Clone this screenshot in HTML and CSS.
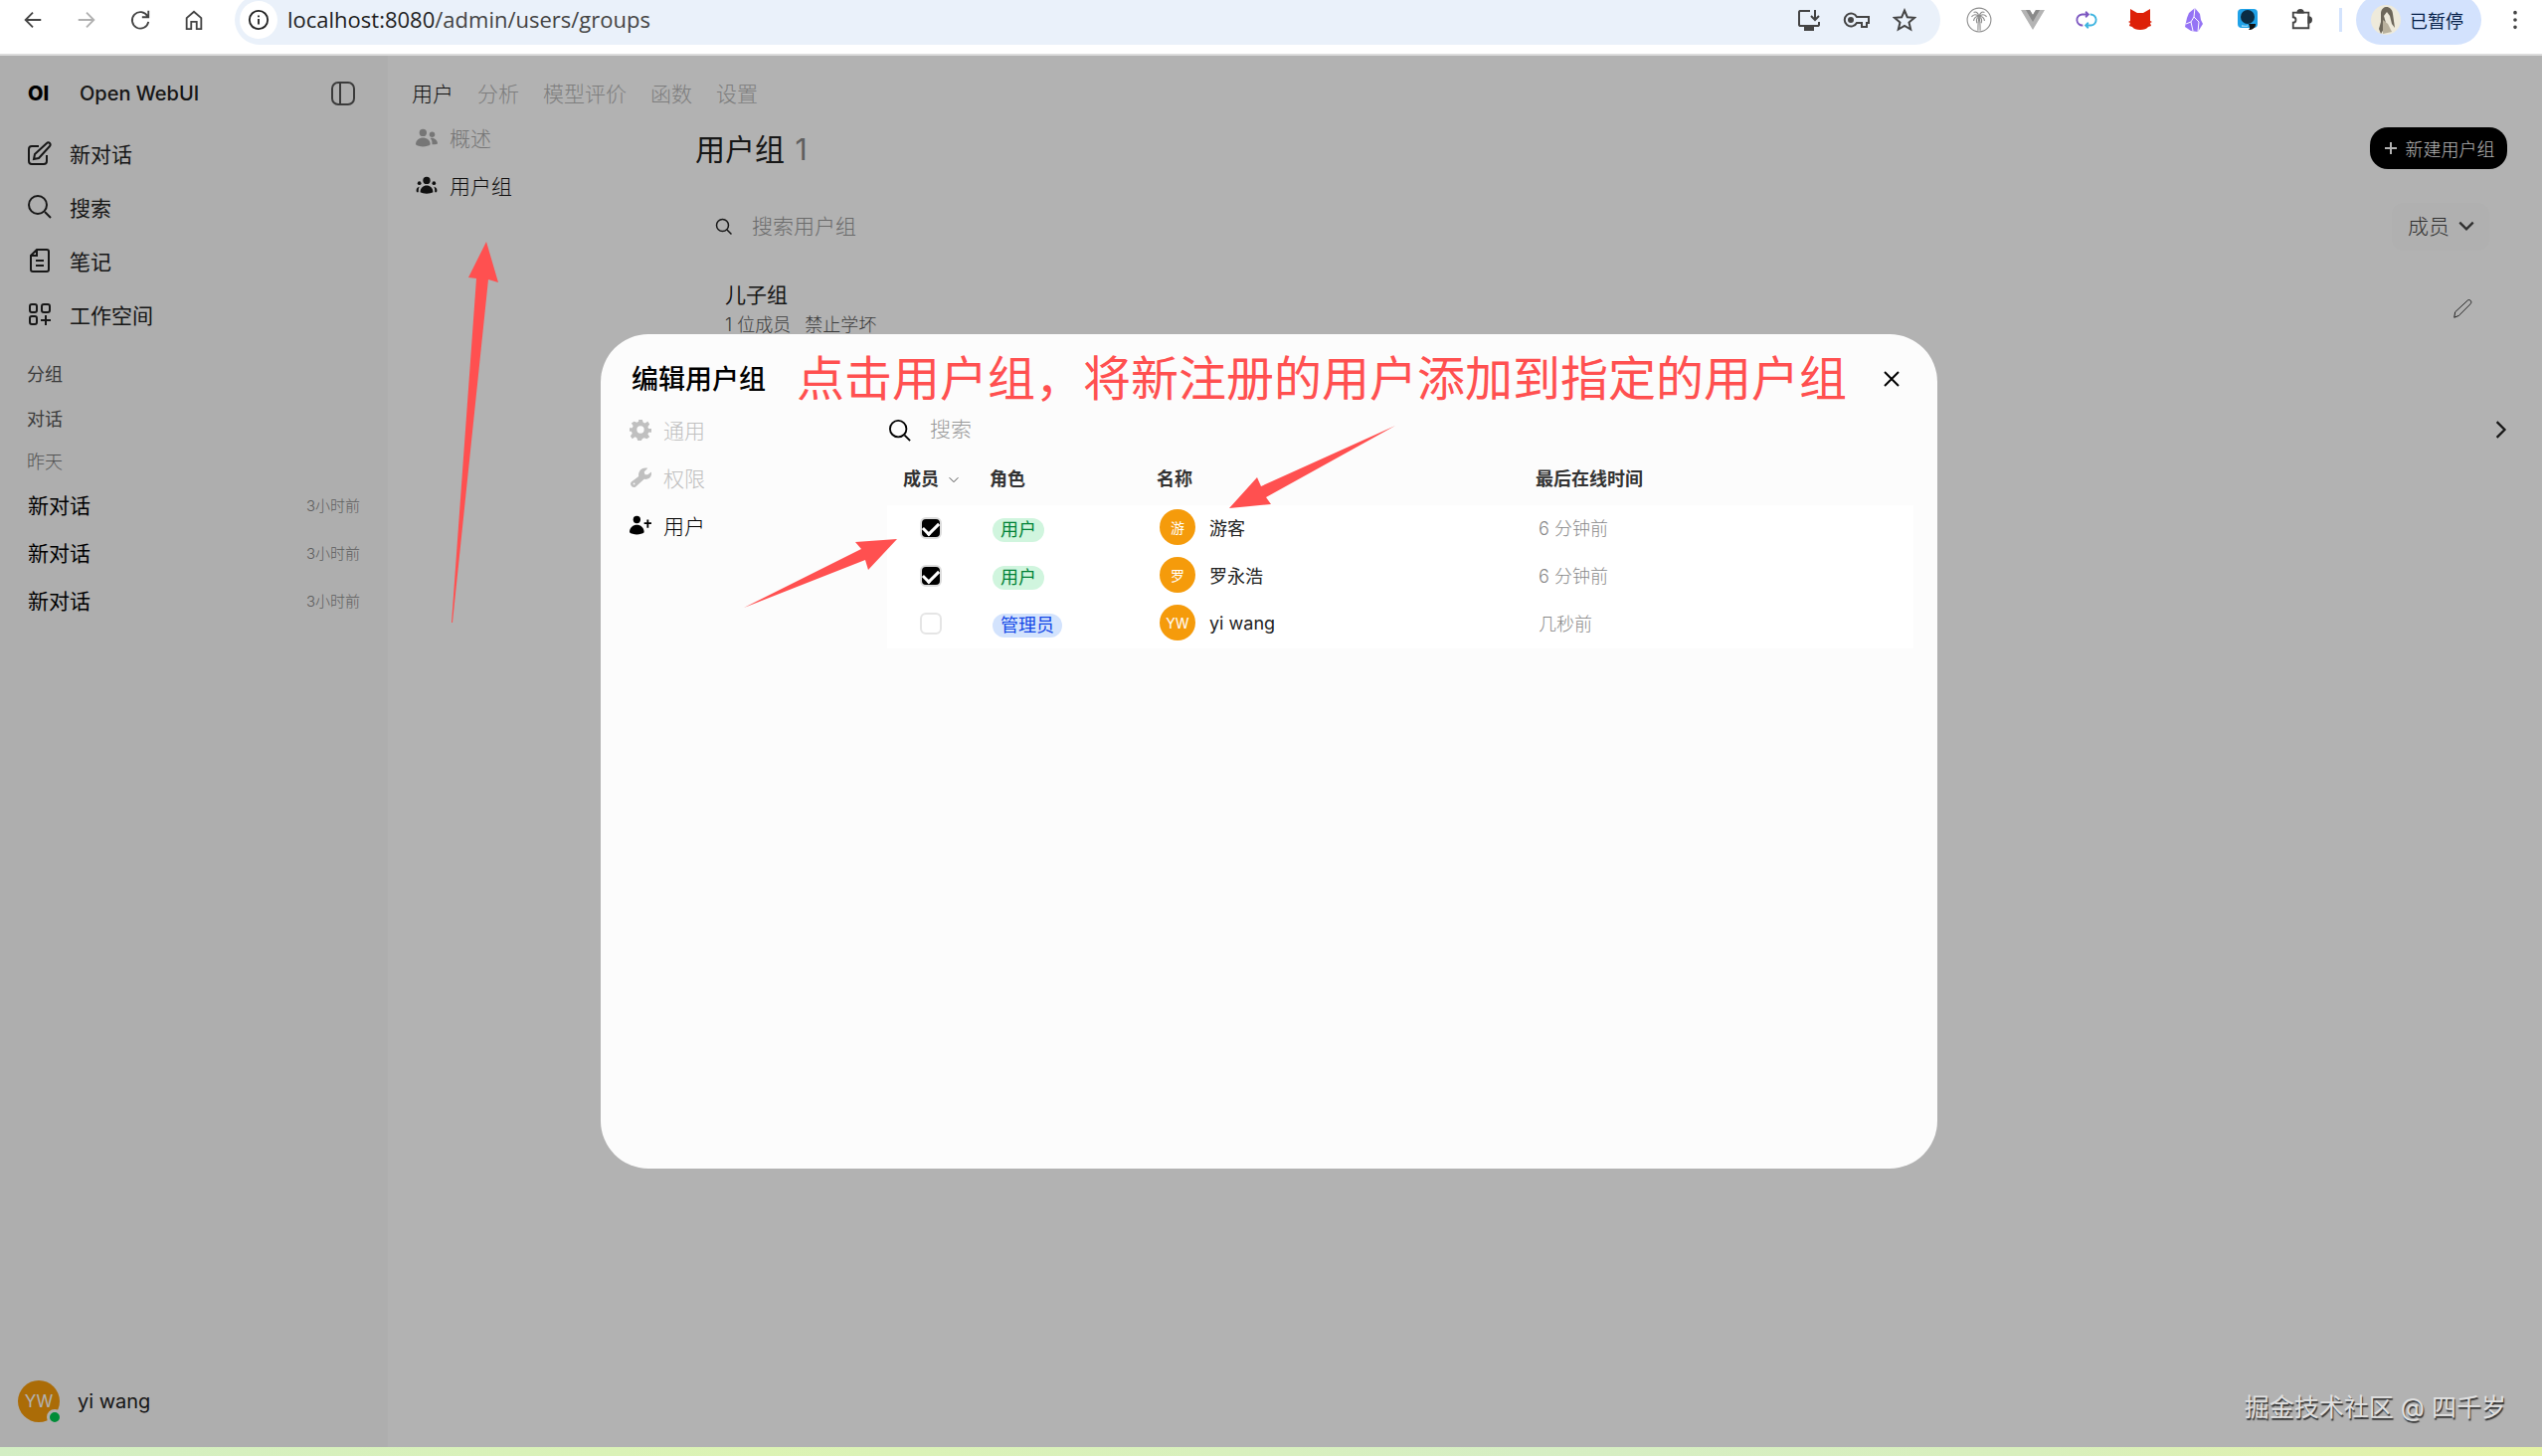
FILE: index.html
```html
<!DOCTYPE html>
<html lang="zh-CN">
<head>
  <meta charset="UTF-8" />
  <meta name="viewport" content="width=device-width, initial-scale=1.0"/>
  <title>用户组 | Open WebUI</title>
  <link rel="stylesheet" href="styles.css">
</head>
<body>

<!-- Browser toolbar -->
<header class="toolbar">
  <button class="tool" aria-label="后退"><svg class="icon" viewBox="0 0 24 24"><path d="M21 12H4M12 4l-8 8 8 8"/></svg></button>
  <button class="tool faded" aria-label="前进"><svg class="icon" viewBox="0 0 24 24"><path d="M3 12h17M12 4l8 8-8 8"/></svg></button>
  <button class="tool" aria-label="刷新"><svg class="icon" viewBox="0 0 24 24"><path d="M20 8a9 9 0 1 0 1 6M21 2v7h-7"/></svg></button>
  <button class="tool" aria-label="主页"><svg class="icon" viewBox="0 0 24 24"><path d="M4 22V10l8-7 8 7v12h-5v-8H9v8z"/></svg></button>

  <div class="address">
    <span class="site-info"><svg class="icon" viewBox="0 0 24 24"><circle cx="12" cy="12" r="10"/><path d="M12 11v6M12 7v2"/></svg></span>
    <div class="url">localhost:8080<span>/admin/users/groups</span></div>
    <button aria-label="安装"><svg class="icon" viewBox="0 0 24 24"><path d="M13 3H3a2 2 0 0 0-1 1v13a2 2 0 0 0 1 1h18a2 2 0 0 0 1-1v-3M18 2v10M14 8l4 4 4-4"/><path class="solid" d="M8 18h8v4H8z"/></svg></button>
    <button aria-label="密码"><svg class="icon wide" viewBox="0 0 28 24"><path d="M14 9h12v6h-2v4h-5v-4h-5a6.500 6.500 0 1 1 0-6z"/><circle class="solid" cx="8" cy="12" r="2"/></svg></button>
    <button aria-label="收藏"><svg class="icon" viewBox="0 0 24 24"><path d="M12 2.500l2.800 6.700 7.200.6-5.500 4.700 1.700 7-6.200-3.700-6.200 3.700 1.700-7L2 9.800l7.200-.6z"/></svg></button>
  </div>

  <button class="tool" aria-label="扩展"><svg class="icon palm" viewBox="0 0 24 24"><circle cx="12" cy="12" r="11"/><path d="M11 22c0-6 0-9 1-13 1 4 1 7 1 13M12 9C9 6 7 7 5 9M12 9C9 8 7 11 7 13M12 9C15 6 17 7 19 9M12 9c3-1 5 2 5 4M12 9c-1-4-3-5-5-4M12 9c1-4 3-5 5-4M12 9c-2 1-3 3-2 6M12 9c2 1 3 3 2 6"/></svg></button>
  <button class="tool" aria-label="Vue"><svg class="icon flat" viewBox="0 0 24 24"><path fill="#b4b4b4" d="M0 2h9l3 5 3-5h9L12 22z"/><path fill="#8a8a8a" d="M5 2h4l3 5 3-5h4l-7 12z"/></svg></button>
  <button class="tool" aria-label="同步"><svg class="icon" viewBox="0 0 24 24"><path stroke="#7d57c1" d="M8 18a6 6 0 0 1-1-12h7M11 3l3 3-3 3"/><path stroke="#3db4e0" d="M16 6a6 6 0 0 1 1 12h-6M14 15l-3 3 3 3"/></svg></button>
  <button class="tool" aria-label="猫"><svg class="icon flat" viewBox="0 0 24 24"><path fill="#dd2108" d="M2 1l7 4h6l7-4v12l2 1-2 1 1 3-3 1c-2 4-14 4-16 0l-3-1 1-3-2-1 2-1z"/></svg></button>
  <button class="tool" aria-label="水晶"><svg class="icon flat" viewBox="0 0 24 24"><path fill="#9573f5" d="M13 0l5 6 1 6 2 4-5 8-7-1-6-4 2-9 2-5z"/><path class="facet" d="M13 0l-1 9 5 5-1 10M12 9l-3 5-5 2M9 14l2 9"/></svg></button>
  <button class="tool" aria-label="聊天"><svg class="icon flat" viewBox="0 0 24 24"><rect x="2" y="1" width="20" height="19" rx="4" fill="#20a2e8"/><circle cx="12" cy="9" r="7" fill="#0b2c43"/><path fill="#111" d="M13 16h7c0 4-3 6-7 6 2-2 1-3 0-6z"/><path fill="#8fd4f8" d="M6 17c3 1 5 1 7 0l-1 2H6z"/></svg></button>
  <button class="tool" aria-label="扩展程序"><svg class="icon" viewBox="0 0 24 24"><path d="M3 4h17v17H3v-6a3 3 0 0 0 0-6z"/><path class="solid" d="M8 4a3 3 0 0 1 6 0zM20 9a3 3 0 0 1 0 6z"/></svg></button>
  <span class="divider"></span>
  <button class="profile">
    <svg viewBox="0 0 30 30"><circle cx="15" cy="15" r="15" fill="#eeeadb"/><path fill="#6d675a" d="M10 8c1-8 11-8 12 1l2 14-3-4-2-8-3-4-3 4 2 7-2 6-3 5-2-5 2-7z"/><path fill="#b9b19d" d="M12 15l5 4 4 8-9 2z"/></svg>
    已暂停
  </button>
  <button class="tool more" aria-label="菜单"><svg class="icon" viewBox="0 0 24 24"><g class="solid"><circle cx="12" cy="4" r="1"/><circle cx="12" cy="12" r="1"/><circle cx="12" cy="20" r="1"/></g></svg></button>
</header>

<div class="app">
  <!-- Sidebar -->
  <aside class="sidebar">
    <div class="brand">
      <b>OI</b>
      <span>Open WebUI</span>
      <button aria-label="切换侧边栏"><svg class="icon" viewBox="0 0 24 24"><rect x="1" y="1" width="22" height="22" rx="6"/><path d="M9 1v22"/></svg></button>
    </div>
    <nav class="menu">
      <a href="#"><svg class="icon" viewBox="0 0 24 24"><path d="M11 5H4a3 3 0 0 0-3 3v12a3 3 0 0 0 3 3h12a3 3 0 0 0 3-3v-6M6 18l1-5L19 2c2-2 5 1 3 3L11 17z"/></svg>新对话</a>
      <a href="#"><svg class="icon" viewBox="0 0 24 24"><circle cx="10" cy="10" r="9"/><path d="M17 17l6 6"/></svg>搜索</a>
      <a href="#"><svg class="icon" viewBox="0 0 24 24"><path d="M9 1h10a2 2 0 0 1 2 2v18a2 2 0 0 1-2 2H5a2 2 0 0 1-2-2V7zM9 1v6H3M8 12h8M8 17h8"/></svg>笔记</a>
      <a href="#"><svg class="icon" viewBox="0 0 24 24"><rect x="2" y="2" width="7" height="8" rx="2"/><rect x="14" y="2" width="8" height="8" rx="2"/><rect x="2" y="14" width="7" height="8" rx="2"/><path d="M18 13v10M13 18h10"/></svg>工作空间</a>
    </nav>
    <div class="section">分组</div>
    <div class="section">对话</div>
    <div class="section day">昨天</div>
    <a class="chat" href="#">新对话<small>3小时前</small></a>
    <a class="chat" href="#">新对话<small>3小时前</small></a>
    <a class="chat" href="#">新对话<small>3小时前</small></a>
    <div class="account">
      <span class="avatar large">YW<i></i></span>
      yi wang
    </div>
  </aside>

  <!-- Admin page -->
  <main class="admin">
    <nav class="topnav">
      <a class="active" href="#">用户</a>
      <a href="#">分析</a>
      <a href="#">模型评价</a>
      <a href="#">函数</a>
      <a href="#">设置</a>
    </nav>
    <div class="columns">
      <nav class="tabs">
        <a href="#"><svg class="fill" viewBox="0 0 24 24"><circle cx="8" cy="7" r="4"/><path d="M0 20c0-10 16-10 16 0-3 3-13 3-16 0z"/><circle cx="18" cy="9" r="3"/><path d="M16 13c4-1 8 2 8 6-2 1-4 1-6 1 0-3 0-5-2-7z"/></svg>概述</a>
        <a class="active" href="#"><svg class="fill" viewBox="0 0 24 24"><circle cx="12" cy="7" r="4"/><circle cx="4" cy="10" r="2"/><circle cx="20" cy="10" r="2"/><path d="M5 20c0-10 14-10 14 0-3 2-11 2-14 0zM4 14c-3 1-4 3-3 6h2c0-2 0-4 1-6zM20 14c3 1 4 3 3 6h-2c0-2 0-4-1-6z"/></svg>用户组</a>
      </nav>
      <section class="content">
        <div class="title">
          <h1>用户组 <span>1</span></h1>
          <button><svg class="icon" viewBox="0 0 16 16"><path d="M8 2v12M2 8h12"/></svg>新建用户组</button>
        </div>
        <div class="filter">
          <svg class="icon" viewBox="0 0 24 24"><circle cx="10" cy="10" r="8"/><path d="M16 16l6 6"/></svg>
          <input type="text" aria-label="搜索用户组" placeholder="搜索用户组" />
          <label class="sort">
            <select aria-label="成员"><option>成员</option></select>
            <svg class="icon" viewBox="0 0 16 16"><path d="M2 5l6 6 6-6"/></svg>
          </label>
        </div>
        <div class="group">
          <div>
            <div class="group-name">儿子组</div>
            <div class="group-info"><span>1 位成员</span><span>禁止学坏</span></div>
          </div>
          <button aria-label="编辑"><svg class="icon" viewBox="0 0 24 24"><path d="M3 21l1-6L18 2c2-1 5 1 3 4L8 19z"/></svg></button>
        </div>
        <button class="next" aria-label="下一页"><svg class="icon" viewBox="0 0 16 16"><path d="M5 1l7 7-7 7"/></svg></button>
      </section>
    </div>
  </main>

  <!-- Edit group modal -->
  <div class="overlay">
    <div class="modal" role="dialog" aria-labelledby="modalTitle">
      <div class="modal-head">
        <h2 id="modalTitle">编辑用户组</h2>
        <p class="note">点击用户组，将新注册的用户添加到指定的用户组</p>
        <button aria-label="关闭"><svg class="icon" viewBox="0 0 16 16"><path d="M1 1l14 14M15 1L1 15"/></svg></button>
      </div>
      <div class="modal-body">
        <nav class="tabs">
          <a href="#"><svg class="fill" viewBox="0 0 24 24"><path fill-rule="evenodd" d="M10 1h4l1 3 2 1 3-2 2 3-2 3 1 2 3 0v4l-3 0-1 2 2 3-3 2-3-1-2 1-1 2h-4l-1-3-2-1-3 2-2-3 2-3-1-2-2 0v-4l3 0 1-2-2-3 3-2 3 1 2-1zM12 8a4 4 0 1 0 0 8 4 4 0 0 0 0-8z"/></svg>通用</a>
          <a href="#"><svg class="fill" viewBox="0 0 24 24"><path fill-rule="evenodd" d="M20 2l-4 4 1 3 3 0 4-3c1 5-3 9-8 8L7 22c-3 3-8-2-5-5l8-6C9 5 14 0 20 2zM4 19a1 1 0 1 0 2 0 1 1 0 0 0-2 0z"/></svg>权限</a>
          <a class="active" href="#"><svg class="fill" viewBox="0 0 24 24"><circle cx="8" cy="6" r="4"/><path d="M0 20c0-11 16-11 16 0-3 3-13 3-16 0zM19 6h2v3h3v2h-3v4h-2v-4h-3V9h3z"/></svg>用户</a>
        </nav>
        <div class="members">
          <div class="filter">
            <svg class="icon" viewBox="0 0 24 24"><circle cx="10" cy="10" r="9"/><path d="M17 17l6 6"/></svg>
            <input type="text" aria-label="搜索" placeholder="搜索" />
          </div>
          <table>
            <thead>
              <tr>
                <th class="col-member">成员<svg class="icon" viewBox="0 0 16 16"><path d="M3 6l5 5 5-5"/></svg></th>
                <th class="col-role">角色</th>
                <th class="col-name">名称</th>
                <th>最后在线时间</th>
              </tr>
            </thead>
            <tbody>
              <tr>
                <td class="check"><input type="checkbox" aria-label="游客" checked /></td>
                <td><span class="badge">用户</span></td>
                <td><div class="person"><span class="avatar">游</span>游客</div></td>
                <td class="seen">6 分钟前</td>
              </tr>
              <tr>
                <td class="check"><input type="checkbox" aria-label="罗永浩" checked /></td>
                <td><span class="badge">用户</span></td>
                <td><div class="person"><span class="avatar">罗</span>罗永浩</div></td>
                <td class="seen">6 分钟前</td>
              </tr>
              <tr>
                <td class="check"><input type="checkbox" aria-label="yi wang" /></td>
                <td><span class="badge admin-role">管理员</span></td>
                <td><div class="person"><span class="avatar">YW</span>yi wang</div></td>
                <td class="seen">几秒前</td>
              </tr>
            </tbody>
          </table>
        </div>
      </div>

      <!-- Arrows, drawn from the modal's corner -->
      <svg class="arrows" width="800" height="400" viewBox="0 0 800 400">
        <path d="M-115-93l12 41-10-3-36 345h-1l25-346-8-1z"/>
        <path d="M298 206l-42 3 6 7-118 59 122-48 3 10z"/>
        <path d="M632 175l28-31 4 9 135-61-130 72 5 7z"/>
      </svg>
    </div>
  </div>

  <div class="watermark">掘金技术社区 @ 四千岁</div>
</div>

<footer class="taskbar"></footer>

</body>
</html>
```
FILE: styles.css
```css
* {
  box-sizing: border-box;
}
body {
  margin: 0;
  height: 100vh;
  display: flex;
  flex-direction: column;
  overflow: hidden;
  font-family: Inter, 'Noto Sans CJK SC', sans-serif;
  font-size: 21px;
  font-weight: 300;
  color: #222;
  background: #fff;
}
a {
  color: inherit;
  text-decoration: none;
}
button, input, select {
  font: inherit;
  color: inherit;
  background: none;
  border: none;
  padding: 0;
  margin: 0;
}
h1, h2, p {
  margin: 0;
}
.icon {
  width: 24px;
  height: 24px;
  display: block;
  flex: none;
  fill: none;
  stroke: currentColor;
  stroke-width: 2;
}
.icon.flat {
  stroke: none;
}
.icon .solid {
  fill: currentColor;
}

/* browser toolbar */
.toolbar {
  flex: none;
  height: 56px;
  display: flex;
  align-items: flex-start;
  padding-left: 6px;
  border-bottom: 2px solid #dcdcdc;
  color: #444;
  overflow: hidden;
}
.tool {
  width: 54px;
  height: 40px;
  flex: none;
  display: flex;
  align-items: center;
  justify-content: center;
}
.tool .icon {
  width: 22px;
  height: 22px;
}
.faded {
  color: #b0b0b0;
}
.address {
  flex: 1;
  height: 50px;
  margin: -5px 12px 0 14px;
  padding: 0 24px 0 5px;
  display: flex;
  align-items: center;
  gap: 24px;
  border-radius: 25px;
  background: #eaf1fa;
}
.site-info {
  width: 38px;
  height: 38px;
  display: flex;
  align-items: center;
  justify-content: center;
  border-radius: 50%;
  background: #fff;
  color: #222;
}
.site-info .icon {
  width: 22px;
  height: 22px;
}
.url {
  flex: 1;
  margin-left: -14px;
  padding-bottom: 2px;
  font-family: 'Open Sans', sans-serif;
  font-size: 22px;
  font-weight: 400;
  color: #1f1f1f;
}
.url span {
  color: #444;
}
.icon.wide {
  width: 28px;
  margin: 0 -2px;
}
.tool .palm {
  width: 26px;
  height: 26px;
  stroke: #8c8c8c;
  stroke-width: 1;
}
.tool .flat {
  width: 24px;
  height: 24px;
}
.facet {
  fill: none;
  stroke: #fff;
  stroke-width: 1;
}
.divider {
  width: 3px;
  height: 24px;
  margin: 8px 14px 0 11px;
  background: #d3e3fd;
}
.profile {
  width: 126px;
  height: 50px;
  margin: -5px 7px 0 0;
  padding-left: 15px;
  display: flex;
  align-items: center;
  gap: 9px;
  border-radius: 25px;
  background: #d3e2fd;
  color: #041e49;
  font-size: 18px;
  font-weight: 400;
}
.profile svg {
  width: 30px;
  height: 30px;
}

/* sidebar */
.app {
  flex: 1;
  min-height: 0;
  position: relative;
  display: flex;
}
.sidebar {
  width: 390px;
  flex: none;
  display: flex;
  flex-direction: column;
  background: #f9f9f9;
}
.brand {
  height: 72px;
  padding: 4px 33px 0 28px;
  display: flex;
  align-items: center;
  font-size: 20px;
  font-weight: 500;
}
.brand b {
  width: 52px;
  font-weight: 800;
  color: #000;
}
.brand button {
  margin-left: auto;
  color: #555;
}
.menu a {
  height: 54px;
  padding: 0 0 2px 28px;
  display: flex;
  align-items: center;
  gap: 18px;
  font-weight: 400;
}
.section {
  height: 45px;
  padding-left: 27px;
  font-size: 18px;
  line-height: 46px;
  font-weight: 400;
  color: #555;
}
.menu + .section {
  margin-top: 10px;
}
.section.day {
  height: 40px;
  line-height: 42px;
  font-weight: 300;
  color: #777;
}
.chat {
  height: 48px;
  padding: 0 28px 2px;
  display: flex;
  align-items: center;
  justify-content: space-between;
  font-weight: 400;
  color: #000;
}
.chat small {
  font-size: 15px;
  font-weight: 300;
  color: #888;
}
.account {
  margin-top: auto;
  padding: 0 0 25px 18px;
  display: flex;
  align-items: center;
  gap: 18px;
  font-size: 20px;
  font-weight: 400;
}
.avatar {
  width: 36px;
  height: 36px;
  flex: none;
  display: flex;
  align-items: center;
  justify-content: center;
  border-radius: 50%;
  background: #f59b0b;
  color: #fff;
  font-size: 14px;
  font-weight: 400;
}
.avatar.large {
  position: relative;
  width: 42px;
  height: 42px;
  font-size: 17px;
}
.avatar i {
  position: absolute;
  right: -3px;
  bottom: -3px;
  width: 16px;
  height: 16px;
  border: 3px solid #f9f9f9;
  border-radius: 50%;
  background: #00c950;
}

/* admin page */
.admin {
  flex: 1;
  min-width: 0;
}
.topnav {
  height: 59px;
  padding: 15px 0 0 24px;
  display: flex;
  align-items: center;
  gap: 24px;
  color: #b4b4b4;
}
.topnav .active {
  color: #171717;
}
.columns {
  display: flex;
  padding: 0 35px 0 28px;
}
.tabs {
  width: 281px;
  flex: none;
}
.tabs a {
  height: 48px;
  padding-bottom: 2px;
  display: flex;
  align-items: center;
  gap: 12px;
}
.tabs .fill {
  width: 22px;
  height: 22px;
  fill: currentColor;
}
.columns .tabs {
  color: #aaa;
}
.columns .tabs .active {
  color: #171717;
}
.content {
  flex: 1;
}
.title {
  height: 68px;
  display: flex;
  align-items: center;
  justify-content: space-between;
}
.title h1 {
  padding-bottom: 3px;
  font-size: 30px;
  font-weight: 400;
}
.title span {
  margin-left: 2px;
  color: #888;
}
.title button {
  width: 138px;
  height: 42px;
  padding-bottom: 1px;
  display: flex;
  align-items: center;
  justify-content: center;
  gap: 7px;
  border-radius: 18px;
  background: #000;
  color: #fff;
  font-size: 18px;
}
.title .icon {
  width: 16px;
  height: 16px;
}
.filter {
  height: 48px;
  display: flex;
  align-items: center;
  gap: 19px;
}
.filter input {
  flex: 1;
  padding-bottom: 2px;
  outline: none;
}
.filter ::placeholder {
  color: #999;
  opacity: 1;
}
.content .filter {
  margin: 21px 18px 21px 20px;
}
.content .filter .icon {
  width: 18px;
  height: 18px;
}
.sort {
  width: 98px;
  height: 48px;
  padding: 0 14px 2px 16px;
  display: flex;
  align-items: center;
  justify-content: space-between;
  border-radius: 12px;
  background: #fcfcfc;
  color: #444;
}
.sort select {
  appearance: none;
}
.group {
  padding: 0 34px 0 30px;
  display: flex;
  justify-content: space-between;
  align-items: center;
}
.group-name {
  line-height: 30px;
  padding-top: 9px;
  font-weight: 400;
}
.group-info {
  display: flex;
  gap: 14px;
  line-height: 30px;
  font-size: 18px;
  color: #555;
}
.group button {
  padding-top: 6px;
}
.group .icon {
  width: 22px;
  height: 22px;
  stroke-width: 1;
}
.next {
  display: block;
  margin: 81px -2px 0 auto;
}
.next .icon {
  width: 18px;
  height: 18px;
}

/* modal */
.overlay {
  position: absolute;
  inset: 0;
  padding-right: 4px;
  display: flex;
  align-items: center;
  justify-content: center;
  background: rgba(0, 0, 0, 0.3);
}
.modal {
  position: relative;
  width: 1344px;
  min-height: 60%;
  border-radius: 48px;
  background: #fcfcfc;
}
.modal-head {
  height: 73px;
  padding: 17px 36px 0 31px;
  display: flex;
  align-items: center;
  gap: 31px;
}
.modal-head h2 {
  padding-bottom: 2px;
  font-size: 27px;
  font-weight: 500;
  color: #000;
}
.modal-head button {
  margin-left: auto;
  color: #000;
}
.modal-head .icon {
  width: 20px;
  height: 20px;
  padding: 2px;
}
.note {
  font-size: 48px;
  line-height: 56px;
  font-weight: 400;
  white-space: nowrap;
  color: #ff5050;
}
.modal-body {
  display: flex;
  padding: 0 24px 0 29px;
}
.modal-body .tabs {
  width: 259px;
  color: #c0c0c0;
}
.modal-body .tabs .active {
  color: #000;
}
.members {
  flex: 1;
}
.members .filter {
  padding-left: 2px;
  color: #000;
}
.members .filter .icon {
  width: 22px;
  height: 22px;
}
table {
  width: 100%;
  table-layout: fixed;
  border-collapse: collapse;
  font-size: 18px;
}
th {
  height: 51px;
  padding: 0 0 5px 16px;
  text-align: left;
  font-weight: 700;
  color: #333;
  white-space: nowrap;
}
th .icon {
  display: inline-block;
  width: 14px;
  height: 14px;
  margin-left: 8px;
  vertical-align: -1px;
  stroke-width: 1;
}
.col-member {
  width: 87px;
}
.col-role {
  width: 168px;
}
.col-name {
  width: 381px;
}
tbody tr {
  background: #fff;
}
td {
  height: 48px;
  padding: 0 0 3px 19px;
}
td.check {
  padding: 0 0 3px;
  text-align: center;
}
.check input {
  appearance: none;
  width: 22px;
  height: 22px;
  border: 2px solid #e5e5e5;
  border-radius: 6px;
  vertical-align: middle;
}
.check input:checked {
  border-color: #ddd;
  background: #000;
}
.check input:checked::after {
  content: '';
  display: block;
  width: 7px;
  height: 13px;
  margin: 0 auto;
  border: solid #fff;
  border-width: 0 3px 3px 0;
  transform: rotate(45deg);
}
.badge {
  display: inline-block;
  margin-top: 6px;
  padding: 0 8px;
  border-radius: 12px;
  line-height: 24px;
  font-weight: 400;
  background: #d0f5de;
  color: #008236;
}
.badge.admin-role {
  background: #d3e3fd;
  color: #1447e6;
}
.person {
  display: flex;
  align-items: center;
  gap: 14px;
  font-weight: 400;
}
.seen {
  color: #888;
}
.arrows {
  position: absolute;
  top: 0;
  left: 0;
  overflow: visible;
  pointer-events: none;
  fill: #ff5050;
}

.watermark {
  position: absolute;
  right: 36px;
  bottom: 24px;
  font-size: 25px;
  font-weight: 400;
  color: #e0e0e0;
  text-shadow: 1px 2px 1px #333;
}
.taskbar {
  flex: none;
  height: 9px;
  background: linear-gradient(90deg, #d3eec4, #dcf3b4 30%, #d6eec4 60%, #d8efbd 80%, #e5f3a5);
}
```
